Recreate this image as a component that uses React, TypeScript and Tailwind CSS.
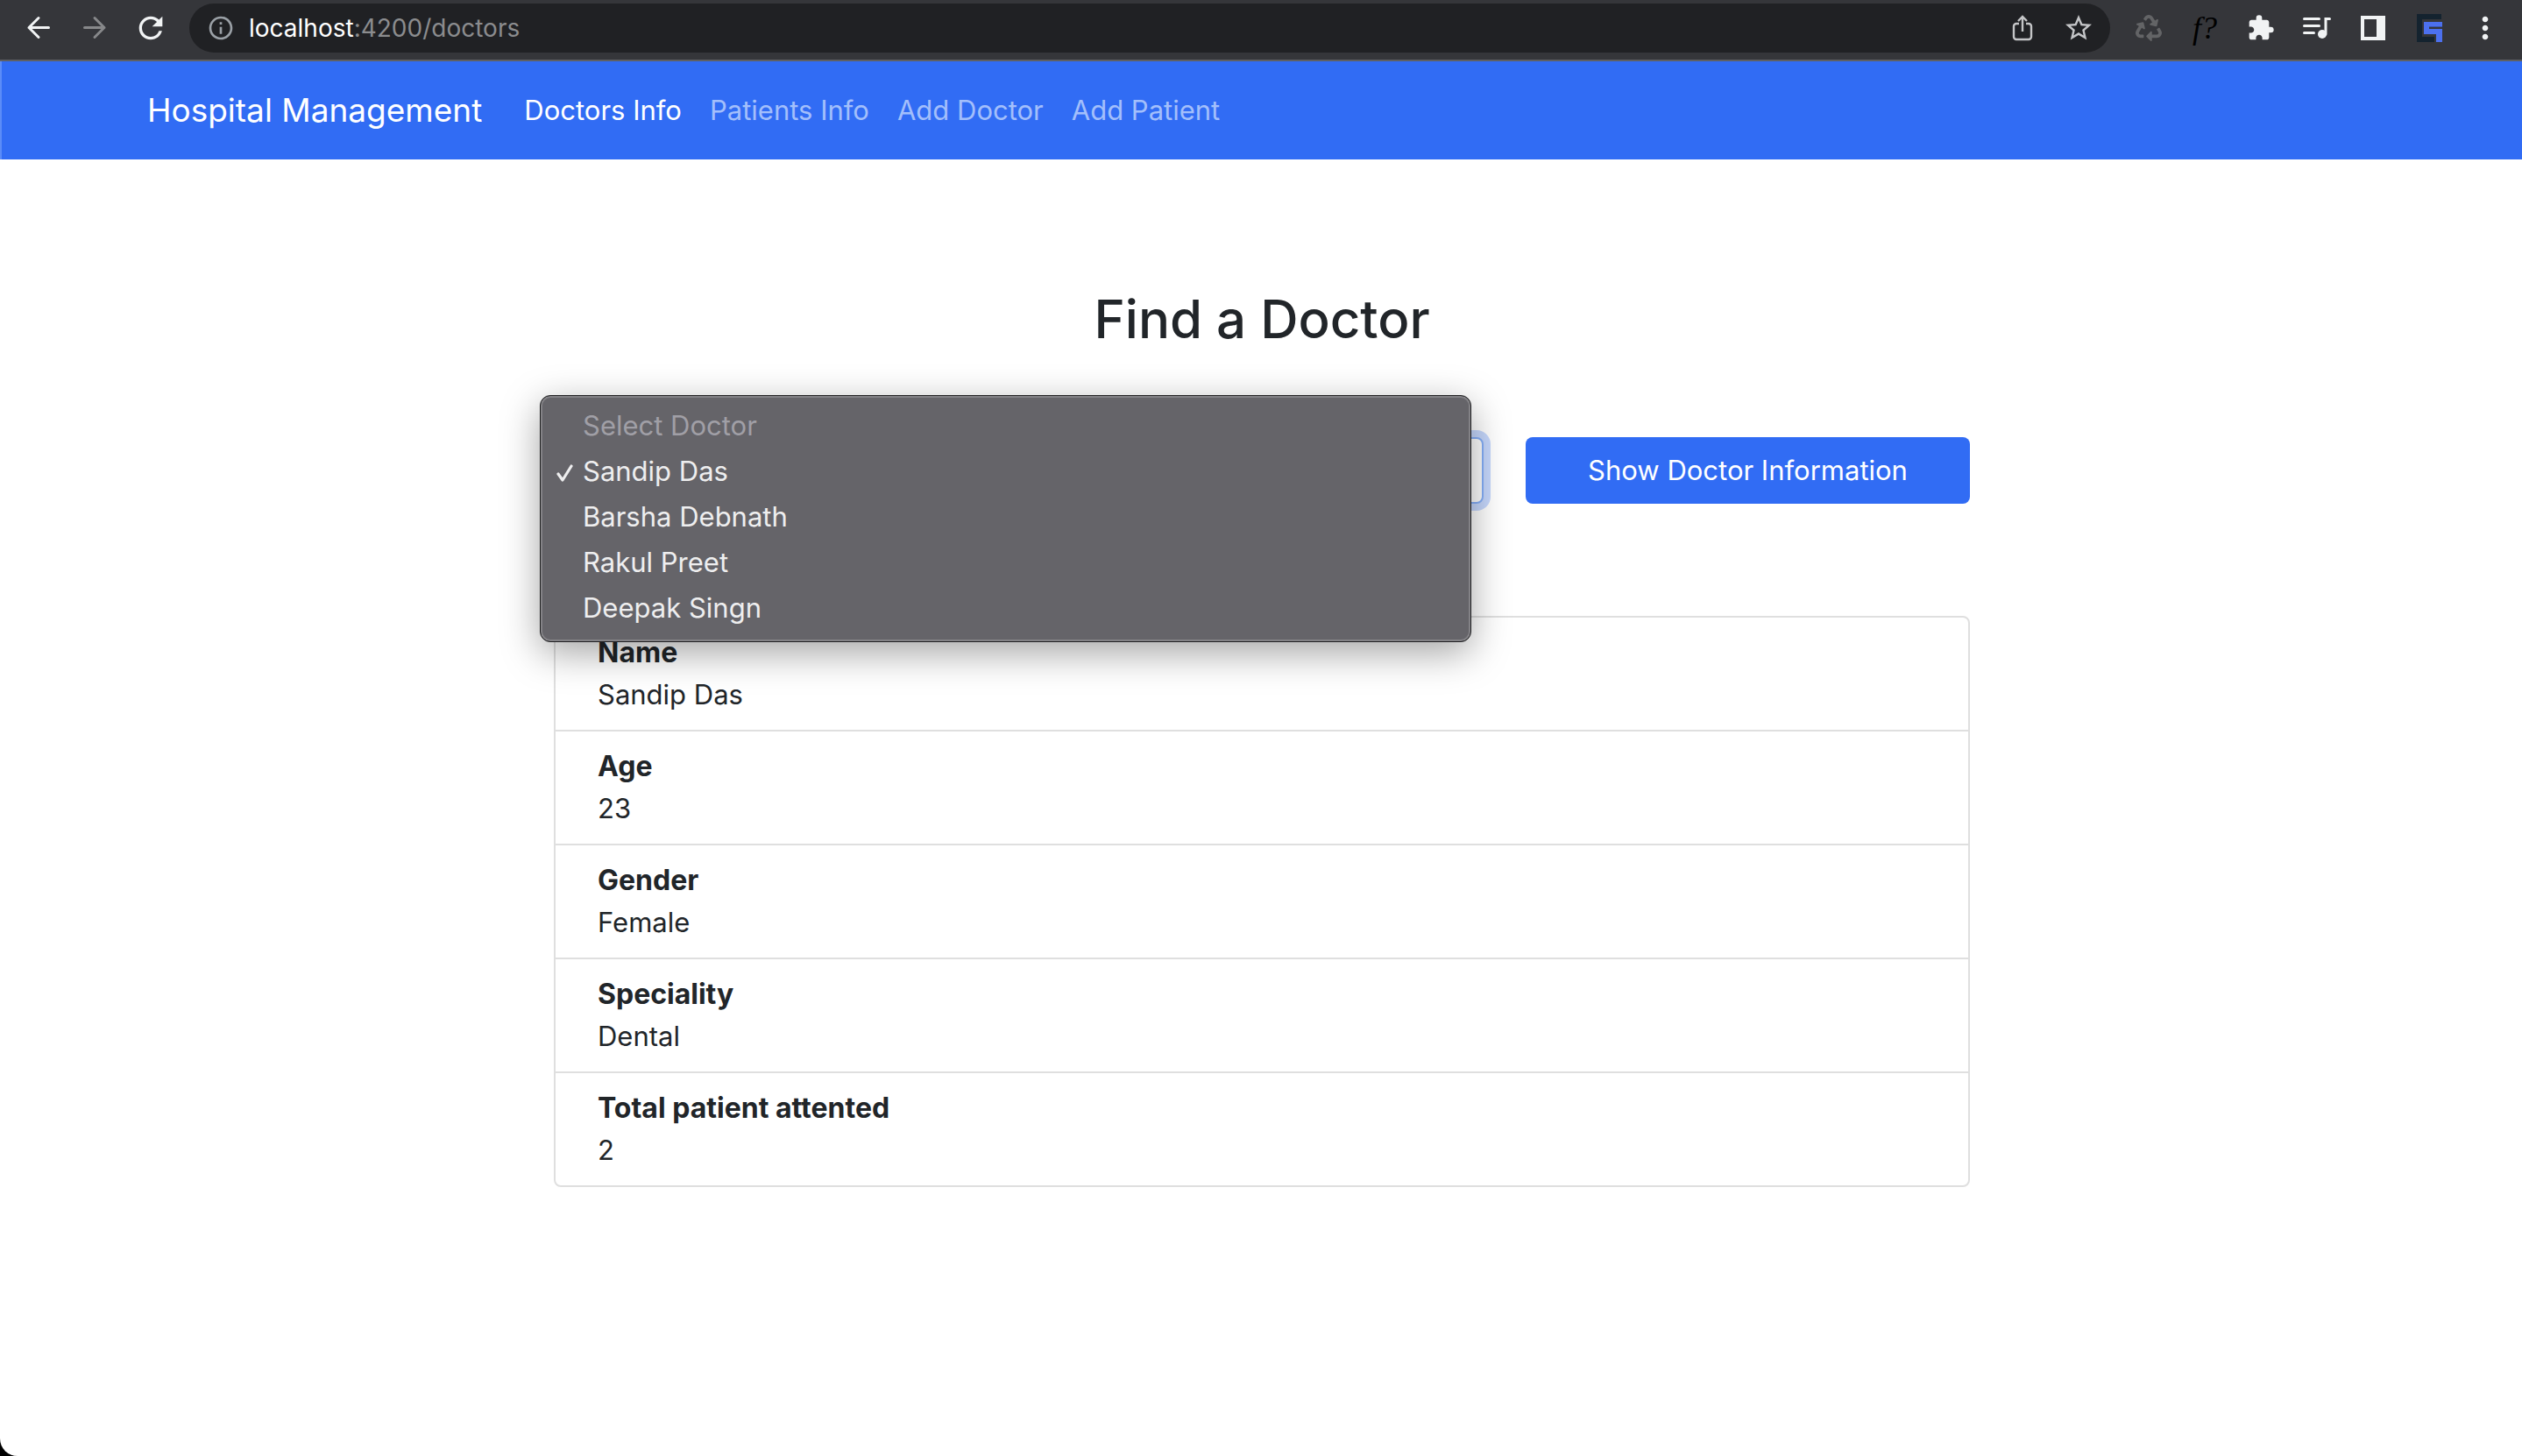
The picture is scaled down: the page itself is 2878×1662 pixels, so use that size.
import React, { useState } from "react";
import { MdRefresh, MdOutlineInfo, MdStarBorder, MdExtension, MdMoreVert } from "react-icons/md";
import { FaRecycle } from "react-icons/fa";

const navLinks = [
  { label: "Doctors Info", active: true },
  { label: "Patients Info", active: false },
  { label: "Add Doctor", active: false },
  { label: "Add Patient", active: false },
];

const doctors = ["Sandip Das", "Barsha Debnath", "Rakul Preet", "Deepak Singn"];

const details = [
  { label: "Name", value: "Sandip Das" },
  { label: "Age", value: "23" },
  { label: "Gender", value: "Female" },
  { label: "Speciality", value: "Dental" },
  { label: "Total patient attented", value: "2" },
];

function ToolButton({ label, children }: { label: string; children: React.ReactNode }) {
  return (
    <button type="button" aria-label={label} className="flex size-9 items-center justify-center">
      {children}
    </button>
  );
}

function BackIcon() {
  return (
    <svg viewBox="0 0 28 28" className="size-7" fill="none" stroke="currentColor" strokeWidth="3" strokeLinecap="round">
      <path d="M3 13.5H25.5M14 2.5L3 13.5L14 24.5" strokeLinejoin="round" />
    </svg>
  );
}

function ForwardIcon() {
  return (
    <svg viewBox="0 0 28 28" className="size-7" fill="none" stroke="currentColor" strokeWidth="3" strokeLinecap="round">
      <path d="M2.5 13.5H25M14 2.5L25 13.5L14 24.5" strokeLinejoin="round" />
    </svg>
  );
}

function ShareIcon() {
  return (
    <svg viewBox="0 0 24 30" className="h-[30px] w-6" fill="none" stroke="currentColor" strokeWidth="2.4">
      <path d="M8 10H5a3 3 0 0 0-3 3v12a3 3 0 0 0 3 3h14a3 3 0 0 0 3-3V13a3 3 0 0 0-3-3h-3" />
      <path d="M12 19V3M7 7l5-5 5 5" />
    </svg>
  );
}

function QueueMusicIcon() {
  return (
    <svg viewBox="0 0 32 26" className="h-[26px] w-8 shrink-0" fill="none" stroke="currentColor" strokeWidth="3" strokeLinecap="round">
      <path d="M1.5 2.5H18.5M1.5 10.5H18.5M1.5 18.5H12.5M26 20V2.5H30.5" />
      <circle cx="22" cy="20" r="5" fill="currentColor" stroke="none" />
    </svg>
  );
}

function SidePanelIcon() {
  return (
    <svg viewBox="0 0 28 28" className="size-7" fill="currentColor" fillRule="evenodd">
      <path d="M0 0H28V28H0ZM4 4V24H18V4Z" />
    </svg>
  );
}

function BlockLogo() {
  return (
    <svg viewBox="0 0 29 32" className="h-8 w-[29px]">
      <path d="M0 0H28V6H6V26H20V32H0Z" fill="#14232f" />
      <path d="M8 9H29V14H14V17H29V32H22V23H8Z" fill="#4c70ee" />
      <path d="M14 14H29V15H14Z" fill="#3a53a8" />
    </svg>
  );
}

function BrowserBar() {
  return (
    <header className="flex h-[70px] items-center border-b-2 border-[#5f6063] bg-[#35363a] pr-6 pb-1 pl-[26px] text-[#f1f3f4]">
      <div className="flex gap-7">
        <ToolButton label="Back"><BackIcon /></ToolButton>
        <ToolButton label="Forward"><span className="text-[#87888a]"><ForwardIcon /></span></ToolButton>
        <ToolButton label="Reload"><MdRefresh className="size-10 shrink-0" /></ToolButton>
      </div>
      <div className="ml-[26px] flex h-14 flex-1 items-center gap-4 rounded-full bg-[#202124] pr-[18px] pl-5">
        <MdOutlineInfo className="size-8 text-[#9aa0a6]" />
        <p className="flex-1 text-[28px] leading-8 text-[#8b8c8e]">
          <span className="text-white">localhost</span>:4200/doctors
        </p>
        <div className="flex gap-7 text-[#c4c5c7]">
          <ToolButton label="Share"><ShareIcon /></ToolButton>
          <ToolButton label="Bookmark"><MdStarBorder className="size-9" /></ToolButton>
        </div>
      </div>
      <div className="ml-[26px] flex gap-7">
        <ToolButton label="Recycle extension"><FaRecycle className="size-[30px] text-[#636466]" /></ToolButton>
        <ToolButton label="Font extension">
          <span className="font-['Liberation_Serif',serif] text-[36px] leading-8 text-black italic">f?</span>
        </ToolButton>
        <ToolButton label="Extensions"><MdExtension className="size-8" /></ToolButton>
        <ToolButton label="Media"><QueueMusicIcon /></ToolButton>
        <ToolButton label="Side panel"><SidePanelIcon /></ToolButton>
        <ToolButton label="Block extension"><BlockLogo /></ToolButton>
        <ToolButton label="Menu"><MdMoreVert className="size-10 shrink-0" /></ToolButton>
      </div>
    </header>
  );
}

function DoctorMenu({ value, onPick }: { value: string; onPick: (v: string) => void }) {
  return (
    <ul
      role="listbox"
      aria-label="Doctors"
      className="absolute -top-12 right-[14px] -left-4 z-10 rounded-xl border border-[#1f1f21] bg-[#656469] pt-2 pb-3 text-[#eeeeef] shadow-[0_12px_44px_rgba(0,0,0,0.36),inset_0_0_0_2px_#838286]"
    >
      <li role="option" aria-selected={false} aria-disabled className="pl-12 leading-[52px] text-[#a09fa6]">
        Select Doctor
      </li>
      {doctors.map((name) => (
        <li
          key={name}
          role="option"
          aria-selected={name === value}
          onClick={() => onPick(name)}
          className="flex items-center pl-[18px] leading-[52px]"
        >
          <span className="flex w-[30px]">
            {name === value && (
              <svg viewBox="0 0 20 20" className="mt-1 size-5" fill="none" stroke="currentColor" strokeWidth="3.2" strokeLinecap="round" strokeLinejoin="round">
                <path d="M2 11l5 7L17 2" />
              </svg>
            )}
          </span>
          {name}
        </li>
      ))}
    </ul>
  );
}

export default function App() {
  const [doctor, setDoctor] = useState("Sandip Das");
  return (
    <div className="min-h-screen bg-black font-['Inter',sans-serif] text-[31px] leading-[48px] text-[#212529]">
      <div className="min-h-screen overflow-hidden rounded-bl-[20px] bg-white">
        <BrowserBar />
        <nav className="border-l-2 border-[#5b8cf8] bg-[#316cf4]">
          <div className="mx-auto flex h-28 max-w-[2640px] items-center px-12">
            <a href="#" className="mr-12 text-[37px] text-white">Hospital Management</a>
            <ul className="flex gap-8">
              {navLinks.map((l) => (
                <li key={l.label}>
                  <a href="#" className={l.active ? "text-white" : "text-[#a3bffb]"}>{l.label}</a>
                </li>
              ))}
            </ul>
          </div>
        </nav>
        <div className="pl-0.5">
          <main className="mx-auto max-w-[1616px] pt-36">
            <h2 className="text-center text-[60px] leading-[77px] font-medium">Find a Doctor</h2>
            <form className="mt-24 flex gap-12" onSubmit={(e) => e.preventDefault()}>
              <div className="relative flex-[1061]">
                <select
                  aria-label="Select Doctor"
                  value={doctor}
                  onChange={(e) => setDoctor(e.target.value)}
                  className="block h-[76px] w-full appearance-none rounded-lg border-2 border-[#86b0fa] bg-white px-6 ring-8 ring-[#c6d8fd]"
                >
                  {doctors.map((name) => (
                    <option key={name}>{name}</option>
                  ))}
                </select>
                <DoctorMenu value={doctor} onPick={setDoctor} />
              </div>
              <button type="submit" className="h-[76px] flex-[507] rounded-lg bg-[#316cf4] text-white">
                Show Doctor Information
              </button>
            </form>
            <dl className="mt-32 divide-y-2 divide-[#dfdfdf] rounded-lg border-2 border-[#dfdfdf]">
              {details.map((d) => (
                <div key={d.label} className="px-12 py-4">
                  <dt className="text-[32px] font-bold">{d.label}</dt>
                  <dd>{d.value}</dd>
                </div>
              ))}
            </dl>
          </main>
        </div>
      </div>
    </div>
  );
}
